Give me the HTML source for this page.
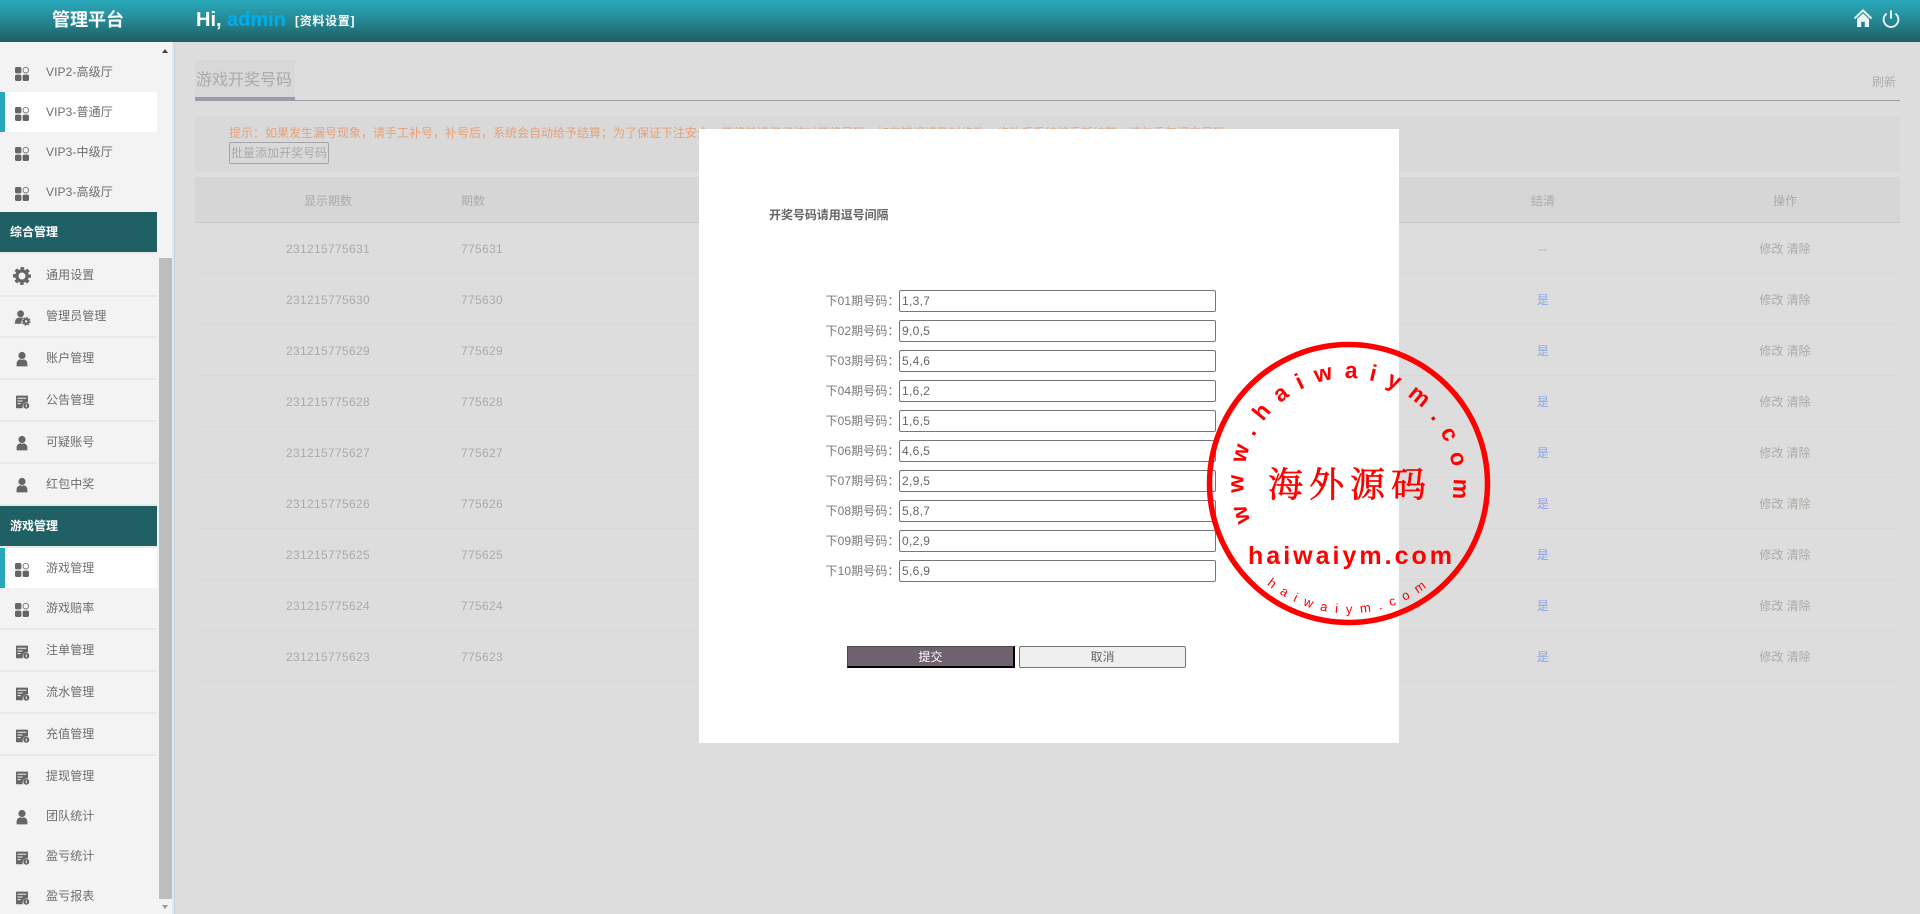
<!DOCTYPE html>
<html lang="zh-CN">
<head>
<meta charset="utf-8">
<title>管理平台</title>
<style>
*{box-sizing:border-box}
html,body{margin:0;padding:0;width:1920px;height:914px;overflow:hidden;background:#ddd}
body{position:relative;font-family:"Liberation Sans","Noto Sans CJK SC",sans-serif;font-size:12px;color:#666}
.a{position:absolute;white-space:nowrap}
#hd{left:0;top:0;width:1920px;height:42px;background:linear-gradient(to bottom,#28a9bb 0%,#27929f 35%,#1f5f63 100%)}
#sb{left:0;top:42px;width:175px;height:872px;background:#f3f3f3}
.t{left:46px;height:20px;line-height:20px;color:#6e6e6e;letter-spacing:.1px}
.h{left:0;width:157px;height:40px;background:#1f6065}
.ht{left:10px;height:20px;line-height:20px;color:#fff;font-weight:bold}
.act{left:0;width:157px;height:40px;background:#fff;border-left:5px solid #28a9bb}
.ln{left:0;width:157px;height:2px;background:#e8e8e8}
.ic{left:13px;width:18px;height:18px}
.col{height:20px;line-height:20px;color:#aeaaa6;letter-spacing:.33px}
.c1{left:268px;width:120px;text-align:center}
.c2{left:461px}
.c3{left:1503px;width:80px;text-align:center;color:#8aa5e8}
.c4{left:1725px;width:120px;text-align:center;letter-spacing:0}
.rl{left:195px;width:1705px;height:1px;background:#d8d8d8}
.lab{left:825.5px;height:20px;line-height:20px;color:#777;letter-spacing:.1px}
.inp{left:899px;width:317px;height:22px;border:1px solid #767676;border-radius:2px;background:#fff;line-height:20px;padding-left:2px;color:#666;letter-spacing:.3px}
</style>
</head>
<body>
<svg width="0" height="0" style="position:absolute">
<defs>
<symbol id="g" viewBox="0 0 18 18"><rect x="2" y="2" width="6.4" height="6.4" rx="1.6" fill="#666"/><circle cx="12.8" cy="5.2" r="2.8" fill="none" stroke="#777" stroke-width=".9"/><rect x="2" y="9.6" width="6.4" height="6.4" rx="1.6" fill="#666"/><rect x="9.6" y="9.6" width="6.4" height="6.4" rx="1.6" fill="#666"/></symbol>
<symbol id="p" viewBox="0 0 18 18"><circle cx="9" cy="5.5" r="3.6" fill="#666"/><path d="M3.6 16.4V13.4C3.6 11 5.6 9.6 7.2 9.2L9 10 10.8 9.2C12.4 9.6 14.4 11 14.4 13.4V16.4Z" fill="#666"/></symbol>
<symbol id="d" viewBox="0 0 18 18"><path d="M3 3.2Q3 2.6 3.6 2.6H14.4Q15 2.6 15 3.2V9.5A4.2 4.2 0 0 0 10 15.2H3.6Q3 15.2 3 14.6Z" fill="#666"/><path d="M4.5 5.2H13.4M4.5 8H9.6M4.5 10.6H7.6" stroke="#f3f3f3" stroke-width="1"/><circle cx="13.3" cy="12.8" r="3" fill="#666"/><path d="M13.3 11.4V14.2" stroke="#f3f3f3" stroke-width="1"/></symbol>
<symbol id="m" viewBox="0 0 18 18"><circle cx="7.6" cy="4.8" r="3.4" fill="#666"/><path d="M1.6 14.8 2.6 10.8C3 9.6 4.4 8.8 5.6 8.6H9.6C10 8.7 10.4 8.8 10.6 9A5 5 0 0 0 8.6 14.8Z" fill="#666"/><circle cx="13.2" cy="12.4" r="2.3" fill="none" stroke="#666" stroke-width="2.2"/><circle cx="13.2" cy="12.4" r="3.7" fill="none" stroke="#666" stroke-width="1.4" stroke-dasharray="1.6 1.3"/></symbol>
<symbol id="s" viewBox="0 0 18 18"><circle cx="9" cy="9" r="5.2" fill="none" stroke="#666" stroke-width="3.4"/><circle cx="9" cy="9" r="7.6" fill="none" stroke="#666" stroke-width="2.8" stroke-dasharray="3.4 2.57" stroke-dashoffset="1.7"/></symbol>
</defs>
</svg>

<!-- header -->
<div class="a" id="hd"></div>
<div class="a" style="left:52px;top:8px;line-height:24px;font-size:18px;font-weight:bold;color:#fff">管理平台</div>
<div class="a" style="left:196px;top:8px;line-height:24px;font-size:20px;font-weight:bold;color:#fff">Hi,</div>
<div class="a" style="left:227px;top:8px;line-height:24px;font-size:20px;font-weight:bold;color:#00aeef">admin</div>
<div class="a" style="left:295px;top:11px;line-height:20px;font-weight:bold;color:#fff;letter-spacing:.7px">[资料设置]</div>
<svg class="a" style="left:1853px;top:8px" width="20" height="20" viewBox="0 0 20 20"><path d="M1.5 10.5 10 2.4 18.5 10.5" fill="none" stroke="#eef6f6" stroke-width="2"/><path d="M4 11 10 5.5 16 11V19H11.8V13.8H8.2V19H4Z" fill="#eef6f6"/></svg>
<svg class="a" style="left:1881px;top:9px" width="20" height="20" viewBox="0 0 20 20"><path d="M5.6 4.6A7.4 7.4 0 1 0 14.4 4.6" fill="none" stroke="#eef6f6" stroke-width="1.9"/><path d="M10 1.2V9.6" stroke="#eef6f6" stroke-width="1.9"/></svg>

<!-- sidebar -->
<div class="a" id="sb"></div>
<div class="a" style="left:172px;top:42px;width:3px;height:872px;background:#e4e8ec;border-right:1px solid #c3d3df"></div>
<div class="a" style="left:159px;top:258px;width:13px;height:641px;background:#bdbdbd"></div>
<div class="a" style="left:162px;top:49px;width:0;height:0;border-left:3.5px solid transparent;border-right:3.5px solid transparent;border-bottom:4px solid #444"></div>
<div class="a" style="left:162px;top:905px;width:0;height:0;border-left:3.5px solid transparent;border-right:3.5px solid transparent;border-top:4px solid #999"></div>

<div class="a act" style="top:92px"></div>
<div class="a h" style="top:212px"></div>
<div class="a ln" style="top:252px"></div>
<div class="a ln" style="top:295px"></div>
<div class="a ln" style="top:336px"></div>
<div class="a ln" style="top:378px"></div>
<div class="a ln" style="top:420px"></div>
<div class="a ln" style="top:462px"></div>
<div class="a ln" style="top:504px"></div>
<div class="a h" style="top:506px"></div>
<div class="a ln" style="top:546px"></div>
<div class="a act" style="top:548px"></div>
<div class="a ln" style="top:628px"></div>
<div class="a ln" style="top:670px"></div>
<div class="a ln" style="top:712px"></div>
<div class="a ln" style="top:754px"></div>

<div class="a t" style="top:62px">VIP2-高级厅</div>
<div class="a t" style="top:102px">VIP3-普通厅</div>
<div class="a t" style="top:142px">VIP3-中级厅</div>
<div class="a t" style="top:182px">VIP3-高级厅</div>
<div class="a ht" style="top:222px">综合管理</div>
<div class="a t" style="top:265px">通用设置</div>
<div class="a t" style="top:306px">管理员管理</div>
<div class="a t" style="top:348px">账户管理</div>
<div class="a t" style="top:390px">公告管理</div>
<div class="a t" style="top:432px">可疑账号</div>
<div class="a t" style="top:474px">红包中奖</div>
<div class="a ht" style="top:516px">游戏管理</div>
<div class="a t" style="top:558px">游戏管理</div>
<div class="a t" style="top:598px">游戏赔率</div>
<div class="a t" style="top:640px">注单管理</div>
<div class="a t" style="top:682px">流水管理</div>
<div class="a t" style="top:724px">充值管理</div>
<div class="a t" style="top:766px">提现管理</div>
<div class="a t" style="top:806px">团队统计</div>
<div class="a t" style="top:846px">盈亏统计</div>
<div class="a t" style="top:886px">盈亏报表</div>

<svg class="a ic" style="top:65px"><use href="#g"/></svg>
<svg class="a ic" style="top:105px"><use href="#g"/></svg>
<svg class="a ic" style="top:145px"><use href="#g"/></svg>
<svg class="a ic" style="top:185px"><use href="#g"/></svg>
<svg class="a ic" style="top:267px"><use href="#s"/></svg>
<svg class="a ic" style="top:309px"><use href="#m"/></svg>
<svg class="a ic" style="top:350px"><use href="#p"/></svg>
<svg class="a ic" style="top:393px"><use href="#d"/></svg>
<svg class="a ic" style="top:434px"><use href="#p"/></svg>
<svg class="a ic" style="top:476px"><use href="#p"/></svg>
<svg class="a ic" style="top:561px"><use href="#g"/></svg>
<svg class="a ic" style="top:601px"><use href="#g"/></svg>
<svg class="a ic" style="top:643px"><use href="#d"/></svg>
<svg class="a ic" style="top:685px"><use href="#d"/></svg>
<svg class="a ic" style="top:727px"><use href="#d"/></svg>
<svg class="a ic" style="top:769px"><use href="#d"/></svg>
<svg class="a ic" style="top:808px"><use href="#p"/></svg>
<svg class="a ic" style="top:849px"><use href="#d"/></svg>
<svg class="a ic" style="top:889px"><use href="#d"/></svg>

<!-- main -->
<div class="a" style="left:195px;top:60px;width:100px;height:37px;background:#d8d8d8"></div>
<div class="a" style="left:196px;top:68px;line-height:26px;font-size:16px;color:#aaa">游戏开奖号码</div>
<div class="a" style="left:195px;top:97px;width:100px;height:3px;background:#9c9ca8"></div>
<div class="a" style="left:195px;top:100px;width:1705px;height:1px;background:#9c9ca8"></div>
<div class="a" style="left:1872px;top:72px;line-height:20px;color:#b0aca8">刷新</div>

<div class="a" style="left:195px;top:116px;width:1705px;height:56px;background:#d9d9d9"></div>
<div class="a" style="left:229px;top:123px;line-height:20px;color:#e8a078">提示：如果发生漏号现象，请手工补号，补号后，系统会自动给予结算；为了保证下注安全，开奖前请仔细核对开奖号码，如有错误请及时修改，修改后系统将重新结算，请勿重复提交号码。</div>
<div class="a" style="left:229px;top:142px;width:100px;height:22px;border:1px solid #a5a5a5;border-radius:2px;line-height:20px;text-align:center;color:#aaa">批量添加开奖号码</div>

<div class="a" style="left:195px;top:177px;width:1705px;height:46px;background:#d6d6d6;border-bottom:1px solid #c8c8c8"></div>
<div class="a col c1" style="top:191px;letter-spacing:0">显示期数</div>
<div class="a col c2" style="top:191px;letter-spacing:0">期数</div>
<div class="a col c3" style="top:191px;color:#aeaaa6;letter-spacing:0">结清</div>
<div class="a col c4" style="top:191px">操作</div>

<div class="a rl" style="top:273px"></div><div class="a rl" style="top:324px"></div><div class="a rl" style="top:375px"></div><div class="a rl" style="top:426px"></div><div class="a rl" style="top:477px"></div><div class="a rl" style="top:528px"></div><div class="a rl" style="top:579px"></div><div class="a rl" style="top:630px"></div><div class="a rl" style="top:681px"></div>

<div class="a col c1" style="top:239px">231215775631</div><div class="a col c2" style="top:239px">775631</div><div class="a col c3" style="top:239px;color:#aeaaa6">--</div><div class="a col c4" style="top:239px">修改 清除</div>
<div class="a col c1" style="top:290px">231215775630</div><div class="a col c2" style="top:290px">775630</div><div class="a col c3" style="top:290px">是</div><div class="a col c4" style="top:290px">修改 清除</div>
<div class="a col c1" style="top:341px">231215775629</div><div class="a col c2" style="top:341px">775629</div><div class="a col c3" style="top:341px">是</div><div class="a col c4" style="top:341px">修改 清除</div>
<div class="a col c1" style="top:392px">231215775628</div><div class="a col c2" style="top:392px">775628</div><div class="a col c3" style="top:392px">是</div><div class="a col c4" style="top:392px">修改 清除</div>
<div class="a col c1" style="top:443px">231215775627</div><div class="a col c2" style="top:443px">775627</div><div class="a col c3" style="top:443px">是</div><div class="a col c4" style="top:443px">修改 清除</div>
<div class="a col c1" style="top:494px">231215775626</div><div class="a col c2" style="top:494px">775626</div><div class="a col c3" style="top:494px">是</div><div class="a col c4" style="top:494px">修改 清除</div>
<div class="a col c1" style="top:545px">231215775625</div><div class="a col c2" style="top:545px">775625</div><div class="a col c3" style="top:545px">是</div><div class="a col c4" style="top:545px">修改 清除</div>
<div class="a col c1" style="top:596px">231215775624</div><div class="a col c2" style="top:596px">775624</div><div class="a col c3" style="top:596px">是</div><div class="a col c4" style="top:596px">修改 清除</div>
<div class="a col c1" style="top:647px">231215775623</div><div class="a col c2" style="top:647px">775623</div><div class="a col c3" style="top:647px">是</div><div class="a col c4" style="top:647px">修改 清除</div>

<!-- modal -->
<div class="a" style="left:699px;top:129px;width:700px;height:614px;background:#fff"></div>
<div class="a" style="left:769px;top:205px;line-height:20px;font-weight:bold;color:#666;letter-spacing:-.05px">开奖号码请用逗号间隔</div>

<div class="a lab" style="top:291px">下01期号码：</div><div class="a inp" style="top:290px">1,3,7</div>
<div class="a lab" style="top:321px">下02期号码：</div><div class="a inp" style="top:320px">9,0,5</div>
<div class="a lab" style="top:351px">下03期号码：</div><div class="a inp" style="top:350px">5,4,6</div>
<div class="a lab" style="top:381px">下04期号码：</div><div class="a inp" style="top:380px">1,6,2</div>
<div class="a lab" style="top:411px">下05期号码：</div><div class="a inp" style="top:410px">1,6,5</div>
<div class="a lab" style="top:441px">下06期号码：</div><div class="a inp" style="top:440px">4,6,5</div>
<div class="a lab" style="top:471px">下07期号码：</div><div class="a inp" style="top:470px">2,9,5</div>
<div class="a lab" style="top:501px">下08期号码：</div><div class="a inp" style="top:500px">5,8,7</div>
<div class="a lab" style="top:531px">下09期号码：</div><div class="a inp" style="top:530px">0,2,9</div>
<div class="a lab" style="top:561px">下10期号码：</div><div class="a inp" style="top:560px">5,6,9</div>

<div class="a" style="left:847px;top:646px;width:168px;height:22px;background:#6e626e;border:1px solid #4a4a4a;border-right:2px solid #000;border-bottom:2px solid #000;line-height:20px;text-align:center;color:#fff">提交</div>
<div class="a" style="left:1019px;top:646px;width:167px;height:22px;background:#efefef;border:1px solid #767676;border-radius:2px;line-height:20px;text-align:center;color:#666">取消</div>

<!-- stamp -->
<svg class="a" style="left:1190px;top:330px" width="320" height="310" viewBox="1190 330 320 310">
<defs>
<path id="arcTop" d="M 1250.5 521 A 105 105 0 1 1 1452.4 498"/>
<path id="arcBot" d="M 1266.7 584.5 A 130 130 0 0 0 1428.5 585.9"/>
</defs>
<circle cx="1348.5" cy="483.5" r="139" fill="none" stroke="#f00" stroke-width="5.5"/>
<text font-family="'Liberation Sans',sans-serif" font-weight="bold" font-size="23" fill="#f00"><textPath href="#arcTop" textLength="384" lengthAdjust="spacing">www.haiwaiym.com</textPath></text>
<text x="1350" y="497" text-anchor="middle" font-family="'Liberation Serif','Noto Serif CJK SC',serif" font-size="35" letter-spacing="6" fill="#f00" stroke="#f00" stroke-width=".7">海外源码</text>
<text x="1248" y="564" font-family="'Liberation Sans',sans-serif" font-weight="bold" font-size="25" textLength="204" lengthAdjust="spacing" fill="#f00">haiwaiym.com</text>
<text font-family="'Liberation Sans',sans-serif" font-size="13" fill="#f00"><textPath href="#arcBot" textLength="172" lengthAdjust="spacing">haiwaiym.com</textPath></text>
</svg>
</body>
</html>
